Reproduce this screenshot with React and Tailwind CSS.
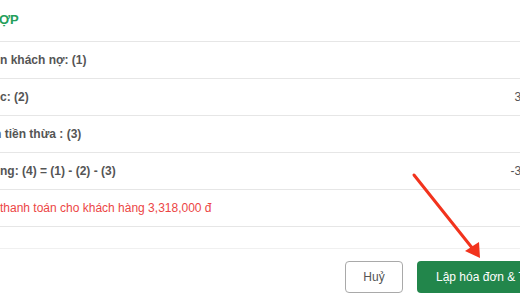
import React from "react";

const rows = [
  { label: "n khách nợ: (1)", value: "", shift: "" },
  { label: "c: (2)", value: "3,318,000", shift: "" },
  { label: "n tiền thừa : (3)", value: "", shift: "-ml-[6px]" },
  { label: "ng: (4) = (1) - (2) - (3)", value: "-3,318,000", shift: "" },
];

const Arrow = () => (
  <svg
    className="pointer-events-none absolute left-0 top-0"
    width="520"
    height="300"
    viewBox="0 0 520 300"
  >
    <line
      x1="414"
      y1="175"
      x2="473"
      y2="249"
      stroke="#f2331d"
      strokeWidth="3"
      strokeLinecap="round"
    />
    <polygon points="480,258 465,251 479,242" fill="#f2331d" />
  </svg>
);

const App = () => {
  return (
    <div className="relative h-[300px] w-[520px] overflow-hidden bg-white font-['Liberation_Sans',Arial,sans-serif] text-[12px]">
      <div className="w-[620px]">
        <div className="flex h-[42px] items-center border-b border-[#e6e6e6] pb-[2px]">
          <span className="-ml-[1px] text-[13px] font-bold text-[#24a05a]">ỢP</span>
        </div>

        {rows.map((r, idx) => (
          <div
            key={idx}
            className="flex h-[37px] items-center justify-between border-b border-[#e6e6e6] pr-[52px]"
          >
            <span className={`${r.shift} font-bold text-[#555]`}>{r.label}</span>
            <span className="text-[#555]">{r.value}</span>
          </div>
        ))}

        <div className="flex h-[37px] items-center border-b border-[#e6e6e6]">
          <span className="text-[#ec4545]">
            thanh toán cho khách hàng 3,318,000 đ
          </span>
        </div>

        <div className="h-[21px]" />

        <div className="flex justify-end gap-[14px] border-t border-[#f0f0f0] pr-[16px] pt-[12px]">
          <button className="flex h-[32px] w-[58px] items-center justify-center rounded-[4px] border border-[#a9a9a9] bg-white text-[#555]">
            Huỷ
          </button>
          <button className="flex h-[32px] w-[187px] items-center rounded-[4px] bg-[#22864b] pl-[19px] text-white">
            Lập hóa đơn &amp; Thanh toán
          </button>
        </div>
      </div>
      <Arrow />
    </div>
  );
};

export default App;
